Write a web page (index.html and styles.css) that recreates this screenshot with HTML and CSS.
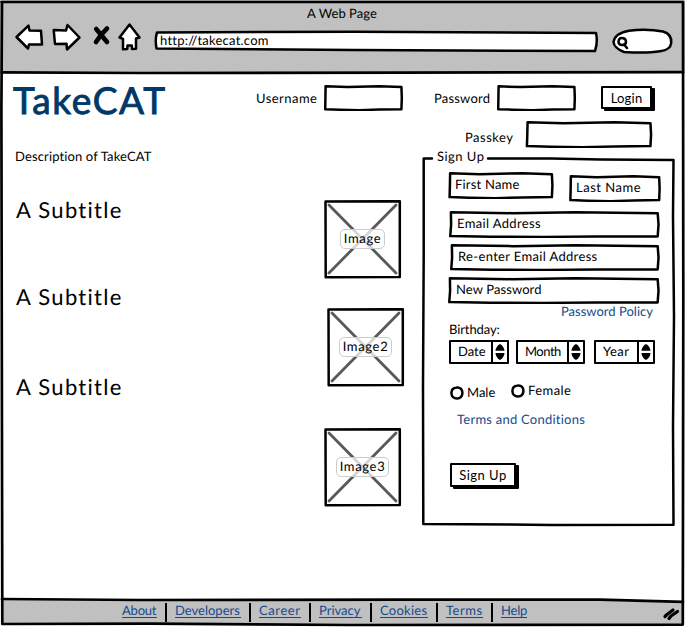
FILE: index.html
```html
<!DOCTYPE html>
<html lang="en">
<head>
<meta charset="utf-8">
<title>TakeCAT</title>
<link rel="stylesheet" href="styles.css">
</head>
<body>
<svg class="defs" aria-hidden="true">
  <symbol id="box" viewBox="0 0 100 100" preserveAspectRatio="none">
    <path vector-effect="non-scaling-stroke" d="M2 5 L30 8 L70 5 L98 8 L98.5 50 L98 93 L70 94 L45 97 L20 95 L1.5 93 L1.8 50 Z"/>
  </symbol>
  <symbol id="wide" viewBox="0 0 100 100" preserveAspectRatio="none">
    <path vector-effect="non-scaling-stroke" d="M.9 5 L30 8 L60 5 L98.9 8 L99.3 50 L98.9 94 L70 94 L45 96 L20 95 L.6 93 L1 50 Z"/>
  </symbol>
  <symbol id="pic" viewBox="0 0 79 79">
    <path d="M1.5 1.5 L75.8 1.2 L75.8 77 L1.7 77.2 Z"/>
    <path class="cross" d="M5 5 L72 73 M72 5 L5 73"/>
  </symbol>
  <symbol id="arrows" viewBox="0 0 10 16">
    <path class="solid" d="M5 0 C7 1 9.5 4 9.5 6.7 H.5 C.5 4 3 1 5 0Z M.5 9 H9.5 C9.5 12 7 15 5 16 C3 15 .5 12 .5 9Z"/>
  </symbol>
  <symbol id="ring" viewBox="0 0 14 14">
    <path d="M6.5 1.5 C10 .8 12.5 3.5 12.4 7 C12.4 10.5 10 12.7 7 12.6 C3.5 12.6 1.5 10 1.4 7 C1.4 4 3.5 1.8 6.5 1.5Z"/>
  </symbol>
</svg>
<div class="window">
  <header class="chrome">
    <div class="chrome-title">A Web Page</div>
    <div class="toolbar">
      <svg class="back" viewBox="0 0 28 26"><path d="M1.5 13 L13.5 1.7 L14.5 6.5 L26 6.8 L27 20.5 L14 20.5 L13 24.5 Z"/></svg>
      <svg class="forward" viewBox="0 0 29 28"><path d="M1.7 7 L14 7.5 L15.5 2 L27.5 14.5 L15 26.5 L14.5 20.7 L3 21 Z"/></svg>
      <svg class="stop" viewBox="0 0 17 19"><path d="M3.2 3 L14 16 M14 2.5 Q8 8 3 16"/></svg>
      <svg class="home" viewBox="0 0 23 28"><path d="M11.5 1.5 L21.5 14.5 L18 15.5 L18 25.8 L14 26 L13.8 22.5 L9.5 22.5 L9.3 26 L5 26.2 L5 15.8 L1.5 14.5 Z"/></svg>
      <div class="address"><svg viewBox="0 0 444 22"><path d="M3 2.5 L200 1.7 L442 3 Q444 12 441 21 L200 20 L2.5 18.5 Q.8 9 3 2.5Z"/></svg><span>http://takecat.com</span></div>
      <svg class="search" viewBox="0 0 61 26"><path d="M17 2.7 Q35 .5 51 3.5 Q60 6 59.2 15 Q58.5 22 48 23.2 Q35 25.5 12 24 Q2 20 1.5 14 Q3 5 17 2.7Z"/><path d="M9.5 10 Q14 10 14 14 Q14 17 10 17 Q6.5 17 6.5 13.5 Q7 10 9.5 10Z M12 16.5 L15 20"/></svg>
    </div>
  </header>

  <main>
    <div class="topbar">
      <h1>TakeCAT</h1>
      <label class="user"><span>Username</span><span class="field"><svg><use href="#box"/></svg></span></label>
      <label class="pass"><span>Password</span><span class="field"><svg><use href="#box"/></svg></span></label>
      <button class="btn login" type="button">Login</button>
    </div>
    <label class="passkey"><span>Passkey</span><span class="field"><svg><use href="#box"/></svg></span></label>

    <div class="columns">
      <section class="intro">
        <p>Description of TakeCAT</p>
        <div class="topics">
          <div class="headings"><h2>A Subtitle</h2><h2>A Subtitle</h2><h2>A Subtitle</h2></div>
          <div class="pictures">
            <div class="picture"><svg><use href="#pic"/></svg><span>Image</span></div>
            <div class="picture second"><svg><use href="#pic"/></svg><span>Image2</span></div>
            <div class="picture third"><svg><use href="#pic"/></svg><span>Image3</span></div>
          </div>
        </div>
      </section>

      <form class="signup">
        <svg class="outline" viewBox="0 0 254 370"><path d="M11 2.5 L2.7 2.5 L2.7 100 L2 230 L2.3 368 L90 368.5 L130 369 L252.5 368.7 L252 270 L253 160 L252 60 L252.5 4 L180 3.5 L130 2.5 L67 2.5"/></svg>
        <div class="legend">Sign Up</div>
        <div class="names">
          <div class="field first"><svg><use href="#box"/></svg><span>First Name</span></div>
          <div class="field last"><svg><use href="#box"/></svg><span>Last Name</span></div>
        </div>
        <div class="field email"><svg><use href="#wide"/></svg><span>Email Address</span></div>
        <div class="field again"><svg><use href="#wide"/></svg><span>Re-enter Email Address</span></div>
        <div class="field newpass"><svg><use href="#wide"/></svg><span>New Password</span></div>
        <a class="policy">Password Policy</a>
        <div class="birthday">Birthday:</div>
        <div class="selects">
          <div class="select date"><span>Date</span><i><svg><use href="#arrows"/></svg></i></div>
          <div class="select month"><span>Month</span><i><svg><use href="#arrows"/></svg></i></div>
          <div class="select year"><span>Year</span><i><svg><use href="#arrows"/></svg></i></div>
        </div>
        <div class="radios">
          <label class="male"><svg><use href="#ring"/></svg><span>Male</span></label>
          <label class="female"><svg><use href="#ring"/></svg><span>Female</span></label>
        </div>
        <a class="terms">Terms and Conditions</a>
        <button class="btn submit" type="button">Sign Up</button>
      </form>
    </div>
  </main>

  <footer>
    <a class="about">About</a><a class="dev">Developers</a><a class="career">Career</a><a class="privacy">Privacy</a><a class="cookies">Cookies</a><a class="tos">Terms</a><a class="help">Help</a>
  </footer>
  <svg class="frame" viewBox="0 0 685 627">
    <path class="shade" d="M3 599.5 L500 599.5 L683 602 L683 624 L3 624 Z"/>
    <path d="M1.5 2 L683 2 L683.3 300 L682.8 624.6 L350 625 L150 623.6 L2.3 624 L1.4 110 L2 2"/>
    <path d="M2 72.4 L140 73 L400 72.6 L683 72.2"/>
    <path d="M2 599 L140 600 L400 599.6 L600 599.6 L683 601.8"/>
    <path class="grip" d="M665 616.5 L667 614.5 L673 610 M669 618.5 L671 616 L677.5 611.5"/>
  </svg>
</div>
</body>
</html>
```
FILE: styles.css
```css
* { box-sizing: border-box; }
body {
  margin: 0;
  background: #fff;
  color: #000;
  font: 13px/16px Lato, sans-serif;
  letter-spacing: .2px;
  text-rendering: geometricPrecision;
}
svg { display: block; fill: #fff; stroke: #000; stroke-width: 2.5; stroke-linejoin: round; stroke-linecap: round; overflow: visible; }
.defs { position: absolute; width: 0; height: 0; }
.cross { fill: none; stroke: #595959; stroke-width: 2.8; }
.solid { fill: #000; stroke: none; }

.window { position: relative; width: 685px; height: 627px; display: flex; flex-direction: column; overflow: hidden; }
.frame { position: absolute; inset: 0; width: 685px; height: 627px; fill: none; stroke-width: 2.7; z-index: 0; pointer-events: none; }
.frame .shade { fill: #c0c0c0; stroke: none; }
.frame .grip { stroke-width: 3.2; }

.chrome { height: 73px; background: #c0c0c0; padding-top: 5px; flex: none; }
.chrome-title { text-align: center; letter-spacing: .05px; line-height: 17px; padding-right: 1px; }
.toolbar { display: flex; align-items: flex-start; padding-left: 15px; }
.back { width: 28px; height: 26px; margin-top: 2px; }
.forward { width: 29px; height: 28px; margin: 1px 0 0 9px; }
.stop { width: 17px; height: 19px; margin: 4px 0 0 12px; stroke-width: 4.6; }
.home { width: 23px; height: 28px; margin: 1px 0 0 8px; }
.address { position: relative; width: 444px; height: 22px; margin: 8px 0 0 13px; padding: 2px 0 0 6px; letter-spacing: .24px; }
.address svg { position: absolute; inset: 0; width: 444px; height: 22px; }
.address span { position: relative; }
.search { width: 61px; height: 26px; margin: 6px 0 0 14px; }

main { height: 526px; flex: none; }
h1, h2, p { margin: 0; font-weight: 400; }
.topbar { display: flex; align-items: flex-start; height: 48px; padding-left: 13px; }
h1 { width: 243px; color: #003867; font-size: 37px; line-height: 44px; letter-spacing: 1.64px; margin-top: 5px; -webkit-text-stroke: .9px #003867; }
.topbar label, .passkey { display: flex; align-items: flex-start; }
.topbar label > span:first-child { margin-top: 17px; }
.user { width: 178px; }
.pass { width: 166px; }
.user > span:first-child { width: 68px; letter-spacing: .46px; }
.pass > span:first-child { width: 63px; }
.field { display: block; position: relative; flex: none; padding-left: 7px; }
.field > svg { position: absolute; inset: 0; width: 100%; height: 100%; fill: none; }
.topbar .field { width: 79px; height: 26px; margin-top: 12px; }
.btn {
  display: block; margin: 0; padding: 0; border: 2px solid #000; border-radius: 1px; background: #fff; color: #000;
  font: inherit; letter-spacing: inherit; box-shadow: 3px 2px 0 #000;
}
.login { width: 51px; height: 23px; margin-top: 13px; margin-left: 1px; line-height: 18px; }
.passkey { padding-left: 465px; height: 27px; letter-spacing: .51px; }
.passkey > span:first-child { width: 60px; margin-top: 8px; }
.passkey .field { width: 128px; height: 27px; }

.columns { display: grid; grid-template-columns: 421px 254px; }
.intro { padding-left: 15px; }
.intro p { letter-spacing: .13px; height: 52px; }
.topics { display: grid; grid-template-columns: 309px 80px; }
h2 { font-size: 22px; line-height: 26px; letter-spacing: 1.28px; }
.headings { display: grid; row-gap: 61px; align-content: start; padding: 0 0 0 1px; margin-top: -3px; }
.headings h2:last-child { margin-top: 3px; }
.picture { position: relative; width: 79px; height: 79px; display: grid; place-items: center; }
.picture > svg { position: absolute; inset: 0; width: 79px; height: 79px; }
.picture > span {
  position: relative; padding: 0 3px; height: 20px; line-height: 17px; border: 1px solid #ccc; border-radius: 5px;
  background: rgba(255, 255, 255, .75); letter-spacing: .65px; left: -1px; top: -1px;
}
.second { margin: 29px 0 0 3px; }
.third { margin-top: 41px; }

.signup { position: relative; height: 370px; margin-top: 8px; }
.outline { position: absolute; top: 0; left: 0; width: 254px; height: 370px; fill: none; stroke-width: 2.5; }
.legend { position: relative; margin-left: 16px; margin-top: -8px; height: 24px; letter-spacing: .48px; }
.names { display: flex; padding-left: 27px; }
.first { width: 106px; height: 27px; padding-top: 4px; }
.last { width: 92px; height: 27px; margin: 3px 0 0 15px; padding-top: 4px; letter-spacing: .5px; }
.email { width: 211px; height: 27px; margin: 9px 0 0 28px; padding: 4px 0 0 8px; letter-spacing: .35px; }
.again { width: 210px; height: 27px; margin: 6px 0 0 29px; padding: 4px 0 0 8px; letter-spacing: .34px; }
.newpass { width: 212px; height: 27px; margin: 6px 0 0 27px; padding: 4px 0 0 8px; letter-spacing: .1px; }
a { display: block; color: #154a8e; }
.policy { margin: -1px 0 0 140px; letter-spacing: .01px; }
.birthday { margin: 2px 0 0 28px; letter-spacing: -.1px; }
.selects { display: flex; margin: 3px 0 0 28px; }
.select { display: flex; height: 24px; border: 2px solid #000; border-radius: 1px; }
.select span { flex: 1; padding-left: 7px; line-height: 19px; letter-spacing: 0; }
.select i { width: 16px; border-left: 2px solid #000; padding: 2px 0 0 2px; }
.select i svg { width: 10px; height: 16px; }
.date { width: 60px; }
.month { width: 69px; margin-left: 7px; }
.month span { letter-spacing: -.5px; }
.year { width: 61px; margin-left: 9px; }
.year span { letter-spacing: .4px; }
.radios { display: flex; margin: 18px 0 0 29px; }
.radios label { display: flex; gap: 3px; }
.radios svg { width: 14px; height: 14px; margin-top: 2px; }
.male { width: 61px; padding-top: 2px; letter-spacing: 0; }
.female { letter-spacing: .45px; }
.terms { margin: 11px 0 0 36px; letter-spacing: .24px; }
.submit { width: 66px; height: 24px; margin: 36px 0 0 29px; line-height: 19px; letter-spacing: .48px; }

footer { position: relative; z-index: 1; height: 28px; padding: 4px 0 0 122px; display: flex; }
footer a { position: relative; height: 15px; line-height: 15px; border-bottom: 1px solid #154a8e; white-space: nowrap; margin-right: 18px; letter-spacing: 0; }
footer a:not(:last-child)::after { content: ""; position: absolute; left: calc(100% + 8px); top: 0; width: 2px; height: 19px; background: #000; }
.about { width: 35px; letter-spacing: -.2px; }
.dev { width: 66px; }
.career { width: 42px; letter-spacing: .59px; }
.privacy { width: 43px; }
.cookies { width: 48px; letter-spacing: .25px; }
.tos { width: 37px; letter-spacing: .5px; }
.help { width: 26px; letter-spacing: -.2px; }
```
